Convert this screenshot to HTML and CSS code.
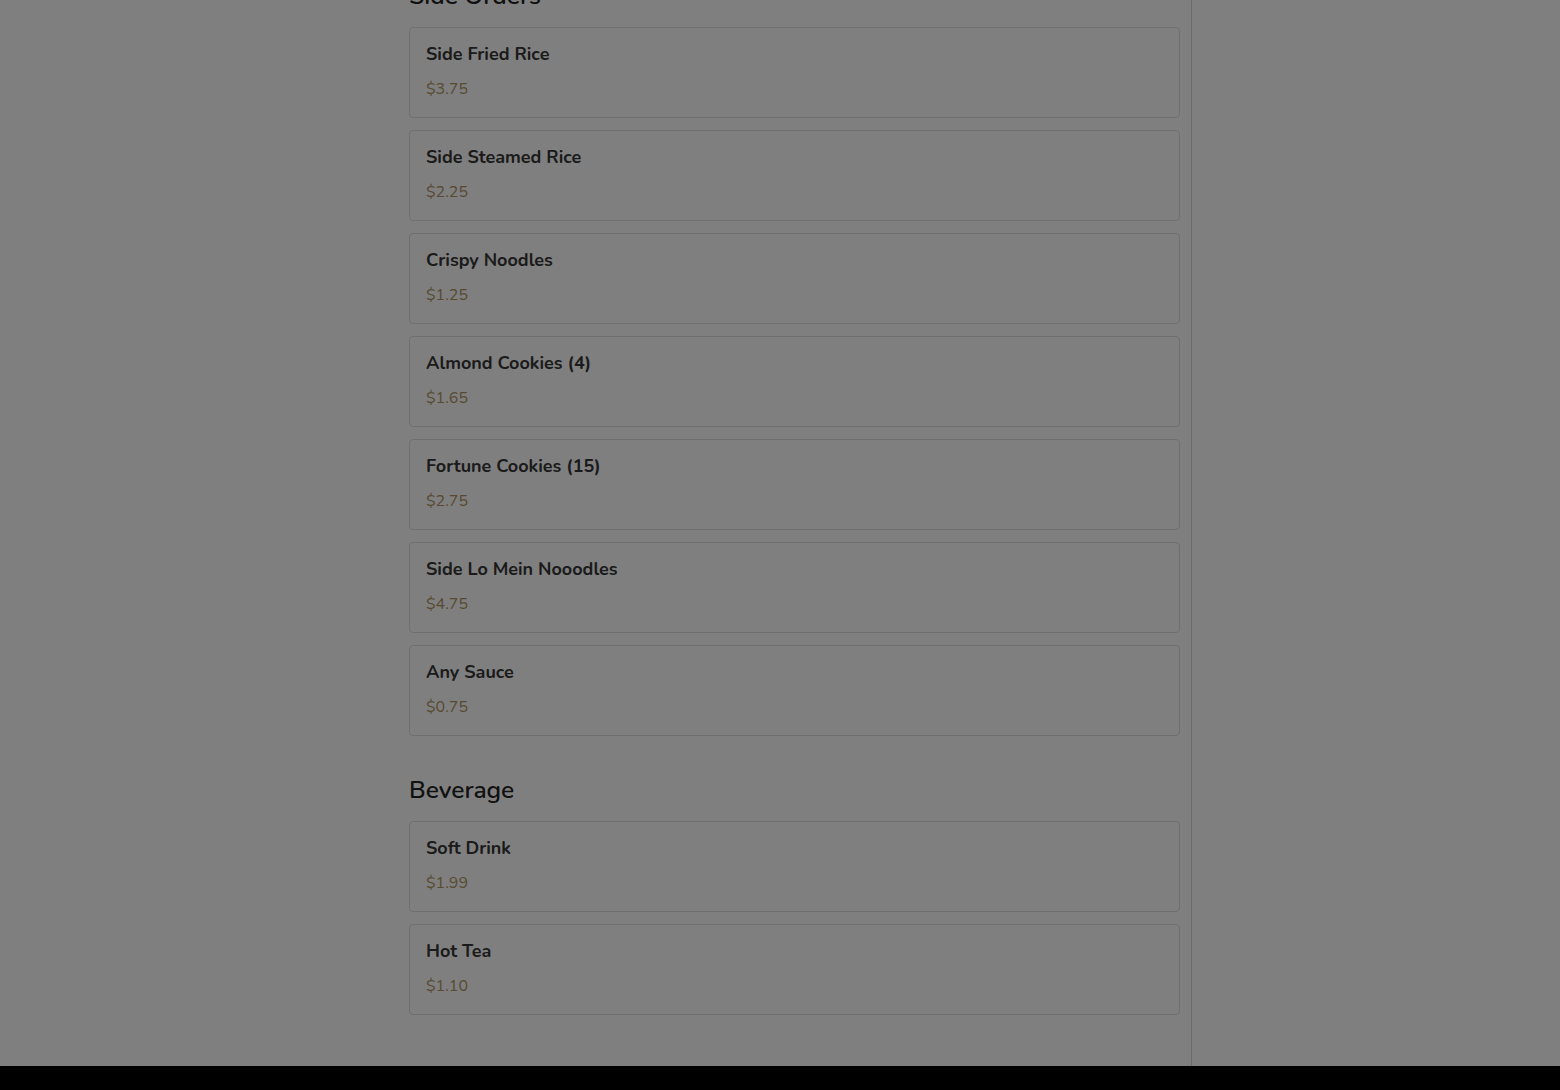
FILE: index.html
```html
<!DOCTYPE html>
<html lang="en">
<head>
<meta charset="utf-8">
<title>Menu</title>
<link rel="stylesheet" href="styles.css">
</head>
<body>
<div class="layout">
  <main class="main">
    <section class="section first">
      <h2 class="section-title">Side Orders</h2>
      <div class="items">
        <div class="item"><div class="item-name">Side Fried Rice</div><div class="item-price">$3.75</div></div>
        <div class="item"><div class="item-name">Side Steamed Rice</div><div class="item-price">$2.25</div></div>
        <div class="item"><div class="item-name">Crispy Noodles</div><div class="item-price">$1.25</div></div>
        <div class="item"><div class="item-name">Almond Cookies (4)</div><div class="item-price">$1.65</div></div>
        <div class="item"><div class="item-name">Fortune Cookies (15)</div><div class="item-price">$2.75</div></div>
        <div class="item"><div class="item-name">Side Lo Mein Nooodles</div><div class="item-price">$4.75</div></div>
        <div class="item"><div class="item-name">Any Sauce</div><div class="item-price">$0.75</div></div>
      </div>
    </section>
    <section class="section">
      <h2 class="section-title">Beverage</h2>
      <div class="items">
        <div class="item"><div class="item-name">Soft Drink</div><div class="item-price">$1.99</div></div>
        <div class="item"><div class="item-name">Hot Tea</div><div class="item-price">$1.10</div></div>
      </div>
    </section>
  </main>
  <aside class="side"></aside>
</div>
<footer class="footer"></footer>
<div class="backdrop"></div>
</body>
</html>
```

FILE: styles.css
```css
* { box-sizing: border-box; }
html, body { margin: 0; padding: 0; }
body {
  background: #ffffff;
  font-family: "Nunito", "Lato", "Open Sans", sans-serif;
  color: #363636;
  overflow: hidden;
  height: 1090px;
}
.layout {
  display: flex;
  height: 1066px;
  overflow: hidden;
}
.main {
  flex: 0 0 1192px;
  padding: 0 11px 0 409px;
  border-right: 1px solid #d4d4d4;
}
.section { margin-top: 40px; }
.section.first { margin-top: -18px; }
.section-title {
  margin: 0 0 16px;
  font-size: 24.5px;
  line-height: 29px;
  font-weight: 600;
  color: #232323;
}
.items {
  display: flex;
  flex-direction: column;
  gap: 12px;
}
.item {
  border: 1px solid #dedede;
  border-radius: 4px;
  padding: 16px;
  background: #fff;
}
.item-name {
  font-size: 18px;
  line-height: 20px;
  font-weight: 700;
  color: #363636;
}
.item-price {
  margin-top: 13px;
  font-size: 16px;
  line-height: 24px;
  color: #b09462;
}
.side { flex: 1; }
.footer {
  height: 24px;
  background: #000;
}
.backdrop {
  position: fixed;
  inset: 0;
  background: rgba(0, 0, 0, 0.5);
}
```
